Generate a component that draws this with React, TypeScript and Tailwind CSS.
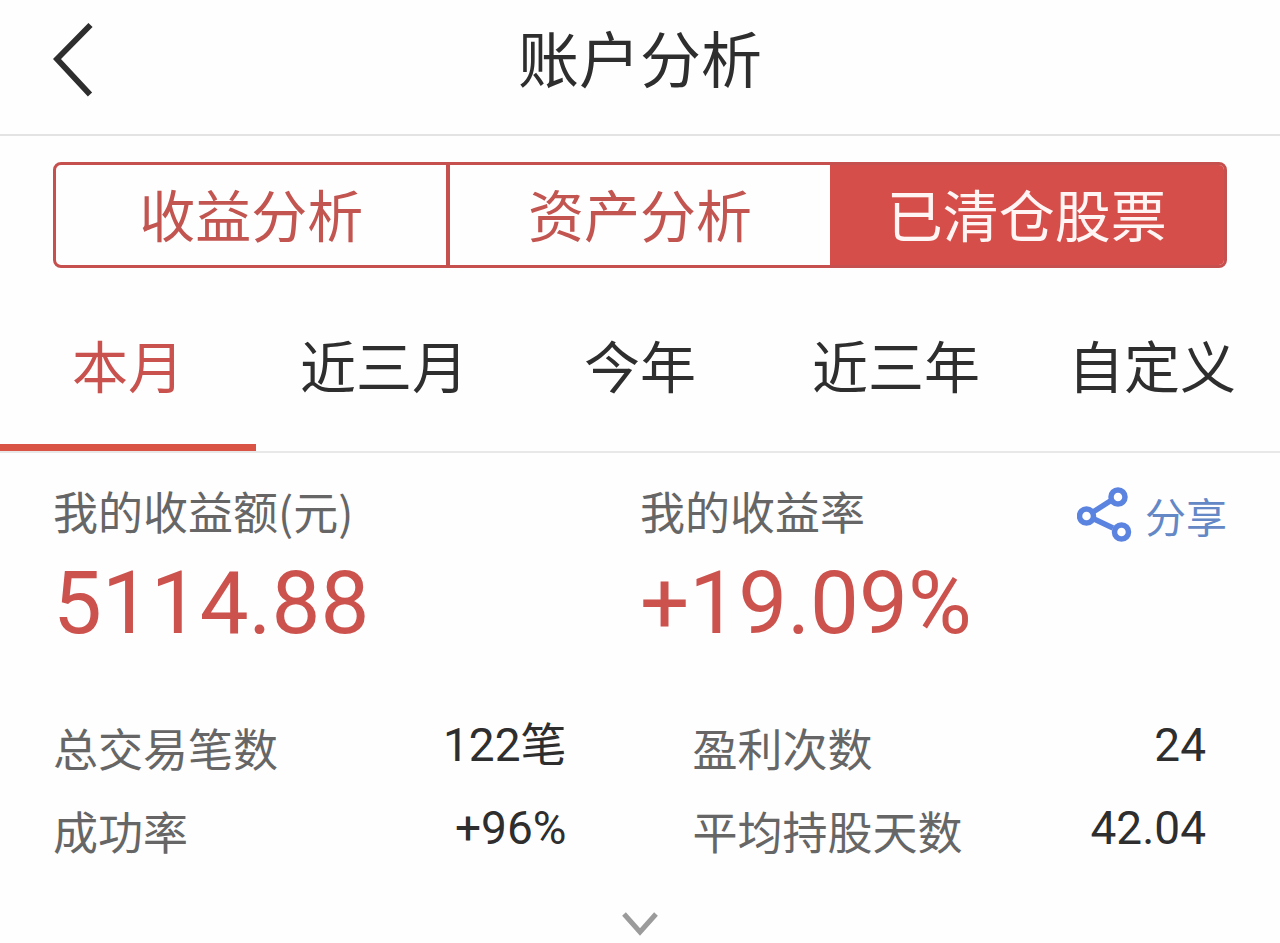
import { useState } from 'react';

const sections = ['收益分析', '资产分析', '已清仓股票'];
const periods = ['本月', '近三月', '今年', '近三年', '自定义'];
const stats = [
  { label: '总交易笔数', value: '122笔' },
  { label: '盈利次数', value: '24' },
  { label: '成功率', value: '+96%' },
  { label: '平均持股天数', value: '42.04' },
];

const numberFont = "font-[Roboto,'Noto_Sans_CJK_SC',sans-serif]";

function ShareIcon() {
  return (
    <svg viewBox="0 0 56 56" className="size-14" fill="none" stroke="#5b83e0" strokeWidth="5.5" aria-hidden="true">
      <path d="M16 25 L34 13.500 M17 32 L36 41" strokeWidth="5.5" />
      <circle cx="9.5" cy="29" r="7" />
      <circle cx="41" cy="10" r="7" />
      <circle cx="44.500" cy="45" r="7" />
    </svg>
  );
}

export default function App() {
  const [section, setSection] = useState(2);
  const [period, setPeriod] = useState(0);

  return (
    <div className="min-h-screen bg-[#fefefe] font-['Noto_Sans_CJK_SC',sans-serif] text-[#2e2e2e]">
      <header className="grid grid-cols-[1fr_auto_1fr] items-start border-b-2 border-[#e3e3e3] px-[53px] pt-[15px] pb-[35px]">
        <button type="button" aria-label="返回" className="justify-self-start pt-2">
          <svg viewBox="0 0 40 74" className="h-[74px] w-10" fill="none" stroke="#2e2e2e" strokeWidth="5.8" aria-hidden="true">
            <path d="M37.500 2 L4 36 L37 71.500" />
          </svg>
        </button>
        <h1 className="text-[61px] leading-[84px]">账户分析</h1>
      </header>

      <main>
        <div className="px-[53px] pt-[26px]">
          <div className="grid grid-cols-[26fr_25fr_26fr] overflow-hidden rounded-lg border-[3px] border-[#c5504e]">
            {sections.map((name, i) => (
              <button
                key={name}
                type="button"
                aria-pressed={i === section}
                onClick={() => setSection(i)}
                className={`h-25 pb-1 text-[56px] leading-[80px] ${i === 0 ? 'border-r-4 border-[#c5504e]' : ''} ${
                  i === section ? 'bg-[#d54e49] text-[#fff5f4]' : 'text-[#c35551]'
                }`}
              >
                {name}
              </button>
            ))}
          </div>
        </div>

        <nav className="mt-[15px] grid grid-cols-5 border-b-2 border-[#e8e8e8]">
          {periods.map((name, i) => (
            <button
              key={name}
              type="button"
              aria-pressed={i === period}
              onClick={() => setPeriod(i)}
              className={`border-b-[7px] pt-[41px] pb-10 text-[56px] leading-[80px] ${
                i === period ? 'border-[#d95445] text-[#c9524e]' : 'border-transparent'
              }`}
            >
              {name}
            </button>
          ))}
        </nav>

        <section className="grid grid-cols-2 px-[53px] pt-7">
          <div>
            <h2 className="text-[45px] leading-[60px] text-[#666]">我的收益额(元)</h2>
            <p className={`${numberFont} text-[87px] leading-[124px] text-[#cc524e]`}>5114.88</p>
          </div>
          <div className="flex items-start justify-between">
            <div>
              <h2 className="text-[45px] leading-[60px] text-[#666]">我的收益率</h2>
              <p className={`${numberFont} text-[87px] leading-[124px] text-[#cc524e]`}>+19.09%</p>
            </div>
            <button type="button" className="flex items-center gap-3 pt-1 text-[41px] leading-[60px] text-[#6488c6]">
              <ShareIcon />
              分享
            </button>
          </div>
        </section>

        <dl className="grid grid-cols-2 gap-x-[126px] gap-y-[19px] pt-[49px] pr-[74px] pl-[53px]">
          {stats.map(({ label, value }) => (
            <div key={label} className="flex items-start justify-between">
              <dt className="pt-1 text-[45px] leading-[60px] text-[#666]">{label}</dt>
              <dd className={`${numberFont} text-[46px] leading-[62px]`}>{value}</dd>
            </div>
          ))}
        </dl>

        <div className="flex justify-center pt-[51px]">
          <button type="button" aria-label="展开">
            <svg viewBox="0 0 36 24" className="h-6 w-9" fill="none" stroke="#9b9b9b" strokeWidth="5" aria-hidden="true">
              <path d="M2 2 L18 20 L34 2" />
            </svg>
          </button>
        </div>
      </main>
    </div>
  );
}
